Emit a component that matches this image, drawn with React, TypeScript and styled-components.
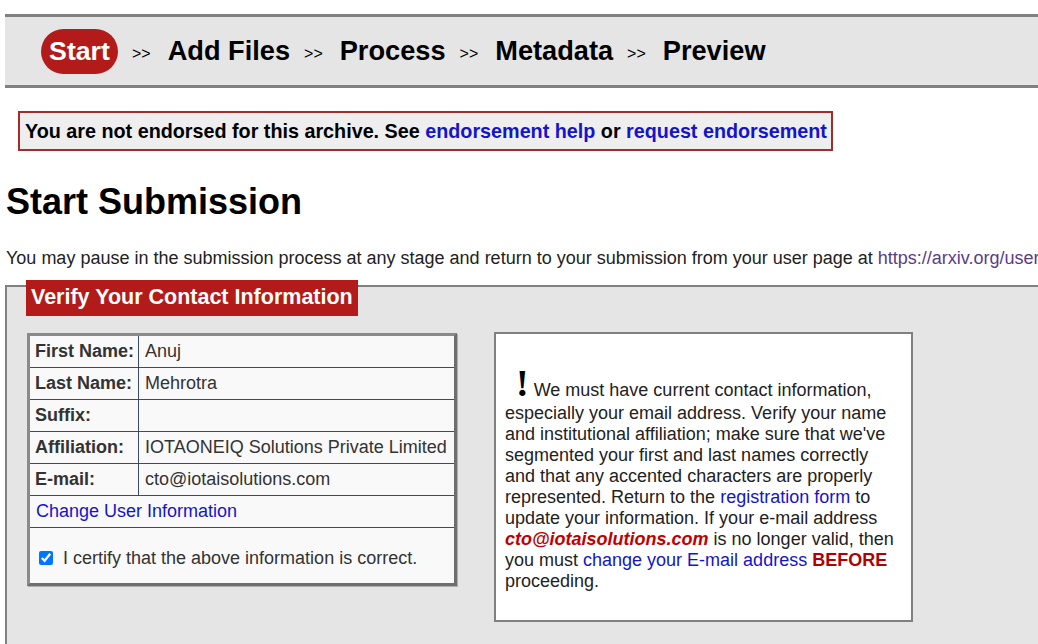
import React from 'react';
import styled, { createGlobalStyle } from 'styled-components';

const GlobalStyle = createGlobalStyle`
  html, body {
    margin: 0;
    padding: 0;
    overflow: hidden;
    background: #ffffff;
  }
  body {
    font-family: "Liberation Sans", Arial, sans-serif;
    color: #000;
  }
`;

const steps = ['Add Files', 'Process', 'Metadata', 'Preview'];

const rows: { label: string; value: string }[] = [
  { label: 'First Name:', value: 'Anuj' },
  { label: 'Last Name:', value: 'Mehrotra' },
  { label: 'Suffix:', value: '' },
  { label: 'Affiliation:', value: 'IOTAONEIQ Solutions Private Limited' },
  { label: 'E-mail:', value: 'cto@iotaisolutions.com' },
];

export default function App() {
  return (
    <Page>
      <GlobalStyle />
      <StepBar>
        <StepActive>Start</StepActive>
        {steps.map((s) => (
          <React.Fragment key={s}>
            <Sep>&gt;&gt;</Sep>
            <Step>{s}</Step>
          </React.Fragment>
        ))}
      </StepBar>

      <Alert>
        You are not endorsed for this archive. See <Link>endorsement help</Link> or{' '}
        <Link>request endorsement</Link>
      </Alert>

      <Title>Start Submission</Title>

      <Intro>
        You may pause in the submission process at any stage and return to your submission from
        your user page at <Visited>https://arxiv.org/user</Visited>
      </Intro>

      <Panel>
        <Legend>Verify Your Contact Information</Legend>
        <Columns>
          <InfoTable>
            <tbody>
              {rows.map((r) => (
                <tr key={r.label}>
                  <Label>{r.label}</Label>
                  <Value>{r.value}</Value>
                </tr>
              ))}
              <tr>
                <Value colSpan={2}>
                  <Link $plain>Change User Information</Link>
                </Value>
              </tr>
              <tr>
                <CertifyCell colSpan={2}>
                  <input type="checkbox" defaultChecked />
                  <span>I certify that the above information is correct.</span>
                </CertifyCell>
              </tr>
            </tbody>
          </InfoTable>

          <Notice>
            <Bang>!</Bang> We must have current contact information, especially your email
            address. Verify your name and institutional affiliation; make sure that we've segmented
            your first and last names correctly and that any accented characters are properly
            represented. Return to the <Link $plain>registration form</Link> to update your
            information. If your e-mail address <Email>cto@iotaisolutions.com</Email> is no longer
            valid, then you must <Link $plain>change your E-mail address</Link> <Warn>BEFORE</Warn>{' '}
            proceeding.
          </Notice>
        </Columns>
      </Panel>
    </Page>
  );
}

const Page = styled.div`
  width: 1300px;
  padding: 14px 5px 0;
`;

const StepBar = styled.div`
  display: flex;
  align-items: center;
  height: 68px;
  padding-left: 36px;
  background: #e5e5e5;
  border-top: 3px solid #808080;
  border-bottom: 3px solid #808080;
`;

const Step = styled.span`
  font-size: 27.2px;
  font-weight: bold;
  color: #000;
`;

const StepActive = styled(Step)`
  display: inline-flex;
  align-items: center;
  justify-content: center;
  width: 77px;
  height: 45px;
  border-radius: 23px;
  background: #b31b1b;
  font-size: 26.7px;
  color: #fff;
`;

const Sep = styled.span`
  font-size: 16px;
  margin: 5px 17px 0 14px;
  color: #000;
`;

const Alert = styled.div`
  display: inline-block;
  margin: 23px 0 0 13px;
  padding: 7px 4px 6px 5px;
  border: 2px solid #a52a2a;
  background: #eeeeee;
  font-size: 19.75px;
  font-weight: bold;
`;

const Link = styled.a<{ $plain?: boolean }>`
  color: #1414c8;
  text-decoration: none;
  font-weight: ${(p) => (p.$plain ? 'normal' : 'bold')};
`;

const Visited = styled.a`
  color: #5b3b8c;
  text-decoration: none;
`;

const Title = styled.h1`
  margin: 30px 0 0 1px;
  font-size: 36px;
  font-weight: bold;
  line-height: 42px;
`;

const Intro = styled.p`
  margin: 25px 0 0 1px;
  font-size: 18px;
  color: #222;
  white-space: nowrap;
`;

const Panel = styled.section`
  margin-top: 16px;
  padding: 0 0 40px 20px;
  min-height: 400px;
  background: #e5e5e5;
  border-top: 2px solid #808080;
  border-left: 2px solid #808080;
`;

const Legend = styled.div`
  display: inline-block;
  margin: -7px 0 0 -1px;
  padding: 5px 5px 6px 5px;
  background: #b31b1b;
  color: #fff;
  font-size: 21.5px;
  font-weight: bold;
`;

const Columns = styled.div`
  display: flex;
  align-items: flex-start;
  gap: 37px;
  margin-top: 17px;
`;

const InfoTable = styled.table`
  width: 430px;
  border-collapse: separate;
  border-spacing: 0;
  background: #f9f9f9;
  border: 3px solid #6e6e6e;
  border-top-color: #8a8a8a;
  border-left-color: #8a8a8a;
  box-shadow: 1px 1px 0 #b0b0b0;
  font-size: 18px;
  color: #333;

  td {
    box-sizing: border-box;
    border-bottom: 1px solid #3b4a6b;
  }
  tr:last-child td {
    border-bottom: none;
  }
`;

const Label = styled.td`
  width: 109px;
  height: 32px;
  padding: 0 0 0 5px;
  font-weight: bold;
  white-space: nowrap;
  border-right: 1px solid #3b4a6b;
`;

const Value = styled.td`
  height: 32px;
  padding: 0 6px;
  white-space: nowrap;
`;

const CertifyCell = styled.td`
  height: 55px;
  padding: 6px 9px 0;
  span {
    margin-left: 10px;
  }
  input {
    margin: 0;
    width: 14px;
    height: 14px;
    vertical-align: -1px;
  }
`;

const Notice = styled.div`
  width: 396px;
  margin-top: -1px;
  padding: 31px 10px 28px 9px;
  background: #ffffff;
  border: 2px solid #808080;
  font-size: 18px;
  line-height: 21px;
  color: #222;
`;

const Bang = styled.span`
  display: inline-block;
  line-height: 36px;
  padding-bottom: 2px;
  margin-left: 11px;
  font-family: "Liberation Serif", "Times New Roman", serif;
  font-size: 38px;
  font-weight: bold;
  color: #000;
`;

const Email = styled.b`
  color: #c00000;
  font-style: italic;
`;

const Warn = styled.b`
  color: #b00000;
`;
